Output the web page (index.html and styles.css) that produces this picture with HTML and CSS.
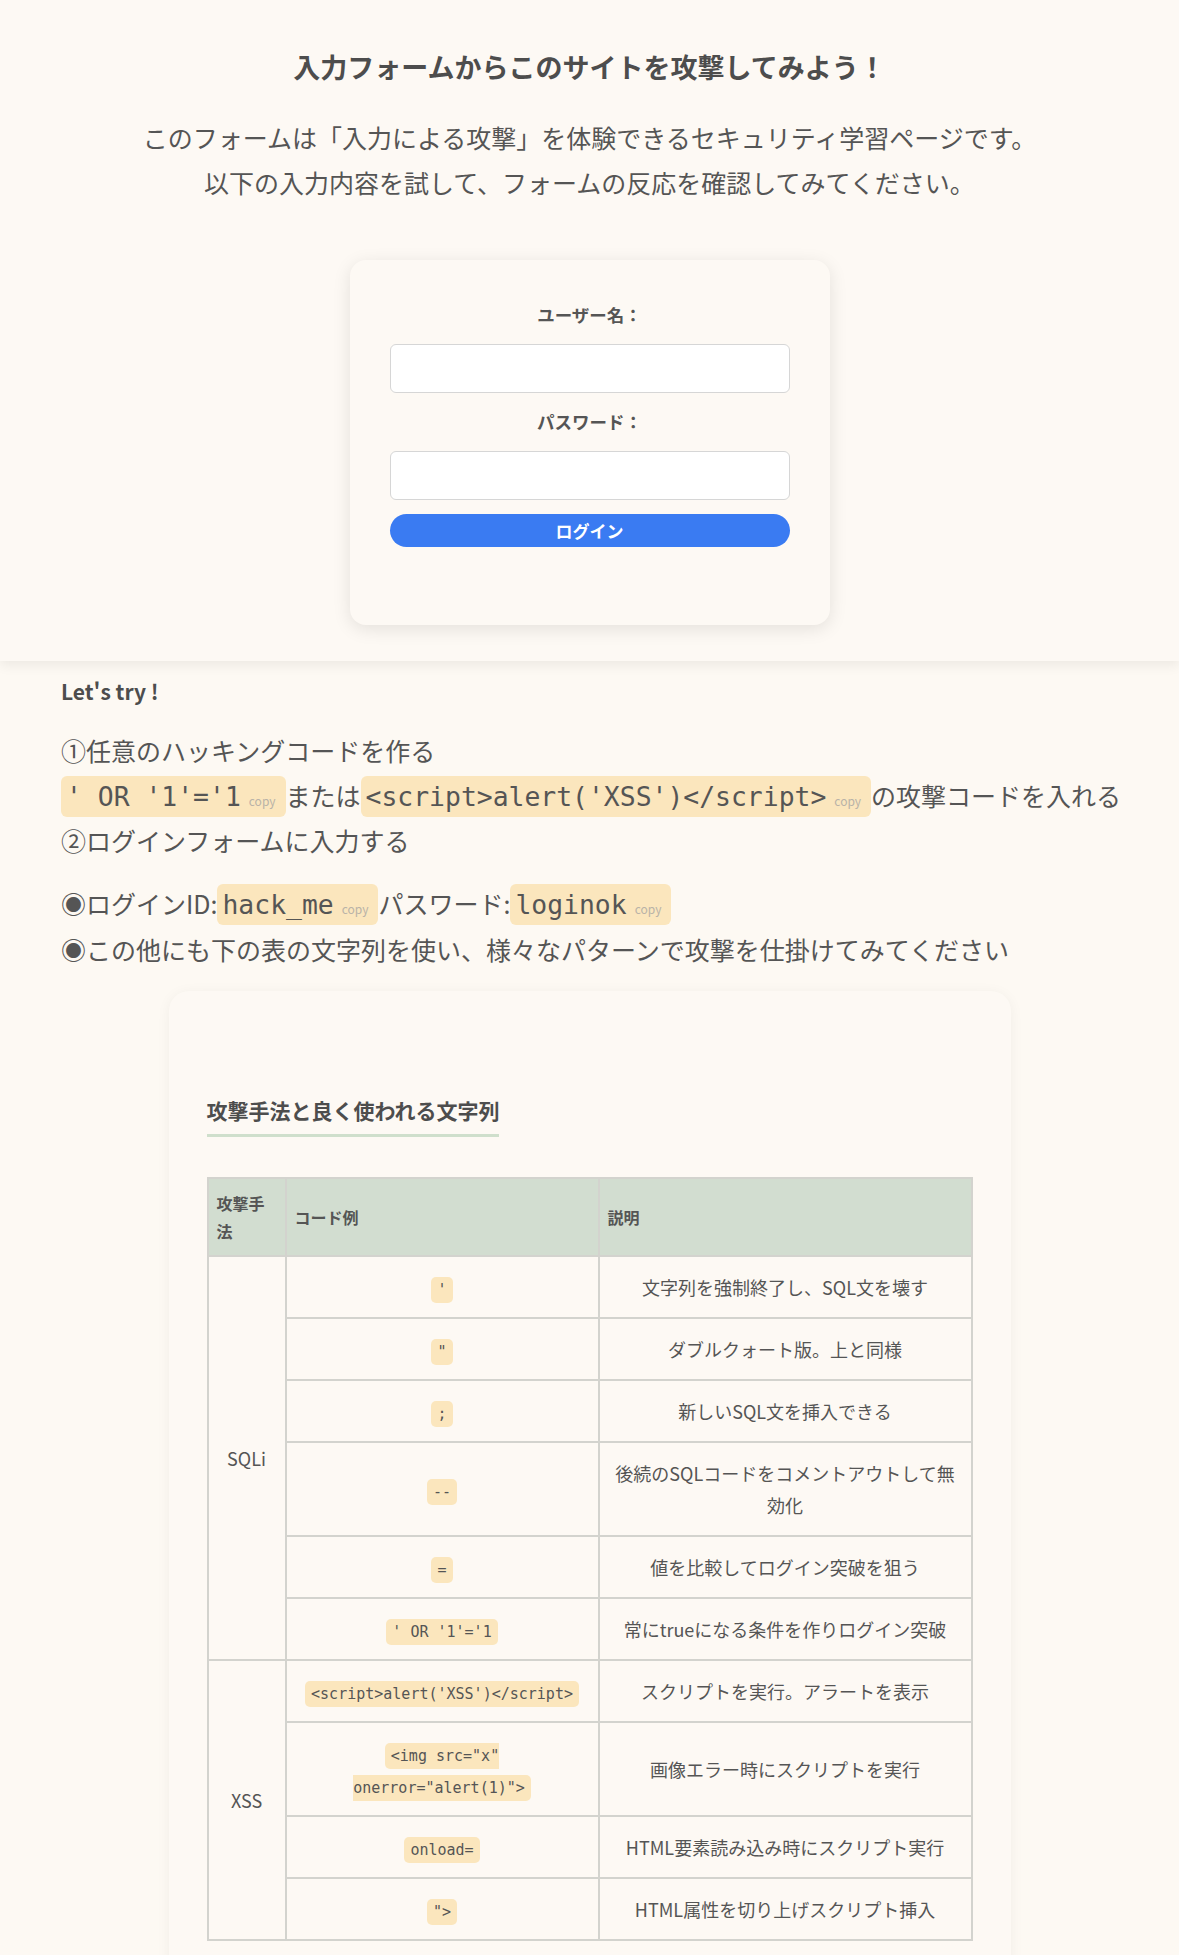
FILE: index.html
```html
<!DOCTYPE html>
<html lang="ja">
<head>
<meta charset="utf-8">
<title>入力フォームからこのサイトを攻撃してみよう！</title>
<link rel="stylesheet" href="styles.css">
</head>
<body>
<header class="hero">
  <h1 class="hero-title">入力フォームからこのサイトを攻撃してみよう！</h1>
  <p class="hero-lead">このフォームは「入力による攻撃」を体験できるセキュリティ学習ページです。<br>以下の入力内容を試して、フォームの反応を確認してみてください。</p>
  <form class="login-card">
    <label class="field-label" for="username">ユーザー名：</label>
    <input class="field-input" id="username" type="text">
    <label class="field-label" for="password">パスワード：</label>
    <input class="field-input field-input-last" id="password" type="password">
    <button class="login-btn" type="button">ログイン</button>
  </form>
</header>

<main class="guide">
  <h2 class="guide-title">Let's try !</h2>
  <p class="steps">①任意のハッキングコードを作る<br><span class="snippet">' OR '1'='1<span class="copy">copy</span></span>または<span class="snippet">&lt;script&gt;alert('XSS')&lt;/script&gt;<span class="copy">copy</span></span>の攻撃コードを入れる<br>②ログインフォームに入力する</p>
  <p class="steps steps-second">◉ログインID:<span class="snippet">hack_me<span class="copy">copy</span></span>パスワード:<span class="snippet">loginok<span class="copy">copy</span></span><br>◉この他にも下の表の文字列を使い、様々なパターンで攻撃を仕掛けてみてください</p>

  <section class="table-card">
    <h3 class="table-title">攻撃手法と良く使われる文字列</h3>
    <table class="attack-table">
      <colgroup>
        <col class="col-method">
        <col class="col-code">
        <col class="col-desc">
      </colgroup>
      <thead>
        <tr><th>攻撃手法</th><th>コード例</th><th>説明</th></tr>
      </thead>
      <tbody>
        <tr><td rowspan="6">SQLi</td><td><code class="cell-code">'</code></td><td>文字列を強制終了し、SQL文を壊す</td></tr>
        <tr><td><code class="cell-code">"</code></td><td>ダブルクォート版。上と同様</td></tr>
        <tr><td><code class="cell-code">;</code></td><td>新しいSQL文を挿入できる</td></tr>
        <tr><td><code class="cell-code">--</code></td><td>後続のSQLコードをコメントアウトして無効化</td></tr>
        <tr><td><code class="cell-code">=</code></td><td>値を比較してログイン突破を狙う</td></tr>
        <tr><td><code class="cell-code">' OR '1'='1</code></td><td>常にtrueになる条件を作りログイン突破</td></tr>
        <tr><td rowspan="4">XSS</td><td><code class="cell-code">&lt;script&gt;alert('XSS')&lt;/script&gt;</code></td><td>スクリプトを実行。アラートを表示</td></tr>
        <tr><td><code class="cell-code">&lt;img src="x" onerror="alert(1)"&gt;</code></td><td>画像エラー時にスクリプトを実行</td></tr>
        <tr><td><code class="cell-code">onload=</code></td><td>HTML要素読み込み時にスクリプト実行</td></tr>
        <tr><td><code class="cell-code">"&gt;</code></td><td>HTML属性を切り上げスクリプト挿入</td></tr>
      </tbody>
    </table>
  </section>
</main>
</body>
</html>
```

FILE: styles.css
```css
* {
  box-sizing: border-box;
}

body {
  margin: 0;
  background: #fdf9f3;
  color: #555;
  font-family: "Noto Sans CJK JP", "Noto Sans", sans-serif;
}

/* ---------- hero ---------- */
.hero {
  background: #fdf9f4;
  padding: 47px 20px 36px;
  text-align: center;
  box-shadow: 0 4px 12px rgba(0, 0, 0, 0.07);
}

.hero-title {
  margin: 0;
  font-size: 27px;
  line-height: 40px;
  font-weight: 700;
  color: #4d4d4d;
}

.hero-lead {
  margin: 28px 0 0;
  font-size: 25px;
  line-height: 45px;
  color: #555;
}

.login-card {
  width: 480px;
  margin: 55px auto 0;
  padding: 42px 40px 78px;
  background: #fdf9f4;
  border-radius: 16px;
  box-shadow: 0 4px 18px rgba(0, 0, 0, 0.1);
  display: flex;
  flex-direction: column;
}

.field-label {
  display: block;
  font-size: 17.5px;
  line-height: 26px;
  font-weight: 700;
  color: #555;
  margin-bottom: 16px;
  text-align: center;
}

.field-input {
  display: block;
  width: 100%;
  height: 49px;
  margin: 0 0 16px;
  border: 1.5px solid #d6d6d6;
  border-radius: 6px;
  background: #fff;
  font-size: 17px;
}

.field-input-last {
  margin-bottom: 14px;
}

.login-btn {
  width: 100%;
  height: 33px;
  border: none;
  border-radius: 999px;
  background: #3a7bf2;
  color: #fff;
  font-family: inherit;
  font-size: 17px;
  font-weight: 700;
  line-height: 1;
  padding: 0;
}

/* ---------- guide ---------- */
.guide {
  padding: 0 61px;
}

.guide-title {
  margin: 15px 0 22px;
  font-size: 21px;
  line-height: 30px;
  font-weight: 700;
  color: #4d4d4d;
}

.steps {
  margin: 0 -40px 0 0;
  font-size: 25px;
  line-height: 45px;
  color: #555;
}

.steps-second {
  margin-top: 17px;
  line-height: 46px;
}

.snippet {
  font-family: "DejaVu Sans Mono", "Liberation Mono", monospace;
  font-size: 26.4px;
  line-height: 1;
  background: #fbe6bd;
  border-radius: 6px;
  padding: 5px 10px 5px 5px;
  color: #555;
}

.copy {
  font-family: "Noto Sans CJK JP", sans-serif;
  font-size: 12px;
  color: #b9b3a8;
  margin-left: 8px;
}

/* ---------- table card ---------- */
.table-card {
  width: 842px;
  margin: 19px auto 0;
  padding: 103px 38px 40px;
  background: #fdf9f4;
  border-radius: 20px;
  box-shadow: 0 2px 14px rgba(0, 0, 0, 0.05);
}

.table-title {
  width: fit-content;
  margin: 0;
  font-size: 21px;
  line-height: 32px;
  font-weight: 700;
  color: #4d4d4d;
  padding-bottom: 8px;
  border-bottom: 3px solid #cfdfcc;
}

.attack-table {
  width: 100%;
  margin-top: 40px;
  border-collapse: collapse;
  table-layout: fixed;
}

.col-method {
  width: 78px;
}

.col-code {
  width: 313px;
}

.attack-table th,
.attack-table td {
  border: 2px solid #d3d3ce;
  vertical-align: middle;
  color: #555;
}

.attack-table th {
  background: #d2ddd0;
  font-size: 16px;
  line-height: 28px;
  font-weight: 700;
  text-align: left;
  padding: 10px 8px;
}

.attack-table td {
  font-size: 18px;
  line-height: 32px;
  text-align: center;
  padding: 14px 12px;
}

.cell-code {
  font-family: "DejaVu Sans Mono", "Liberation Mono", monospace;
  font-size: 15px;
  line-height: 1;
  background: #fbe6bd;
  border-radius: 5px;
  padding: 4px 6px;
  color: #555;
}
```
